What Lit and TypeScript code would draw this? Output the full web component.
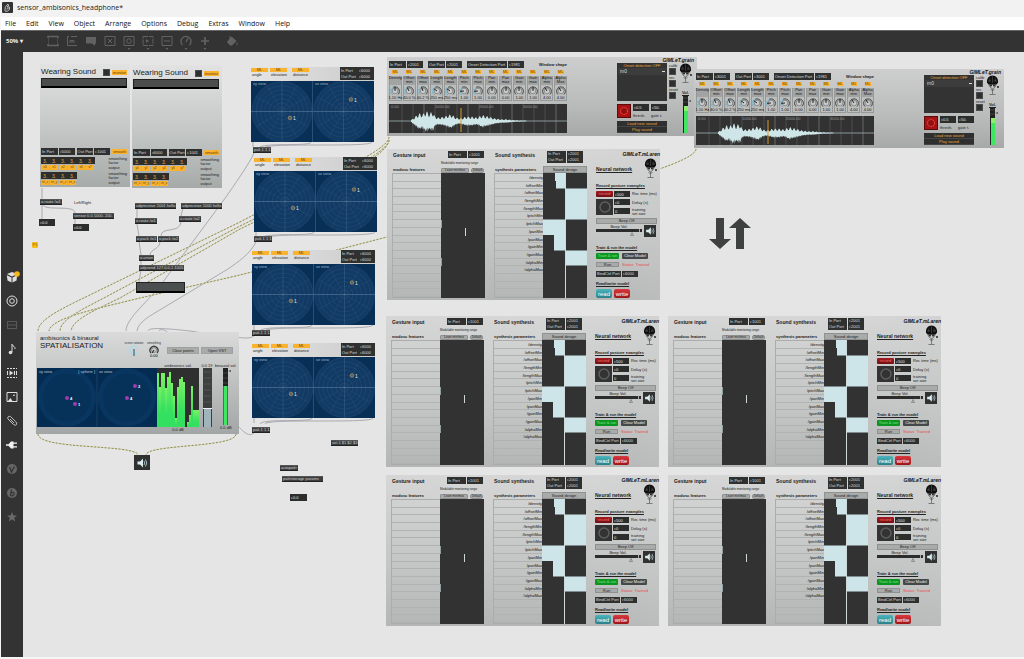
import { LitElement, html, svg, css } from "lit";
import { customElement, property } from "lit/decorators.js";

/* Patcher view origin inside the window */
const OX = 23;
const OY = 52;
const at = (x: number, y: number, w?: number) =>
  `left:${x - OX}px;top:${y - OY}px;${w ? `width:${w}px` : ""}`;

const shared = css`
  :host {
    display: block;
    box-sizing: border-box;
    font: 4px/5px "Liberation Sans", Arial, sans-serif;
    color: #222;
  }
  * { box-sizing: border-box; }
  button, input, select {
    appearance: none;
    font: inherit;
    color: inherit;
    margin: 0;
    padding: 0;
    border: 0;
    border-radius: 0;
    background: none;
    min-width: 0;
    white-space: nowrap;
  }
  svg { display: block; }
  h2, h3, p { margin: 0; font-weight: 700; white-space: nowrap; }
  .port { display: flex; gap: 1px; height: 7px; line-height: 7px; color: #ddd; white-space: nowrap; }
  .port span { flex: 1; background: #2f3131; padding-left: 1px; }
  .port input { width: 16px; height: 7px; background: #2f3131; padding-left: 1px; }
  .num { height: 7px; background: #2c2e2e; color: #e4e4e4; padding-left: 1px; width: 16px; }
  .orange { background: #f9b32f; color: #6b4508; height: 5px; line-height: 5px; text-align: center; }
  .grey { background: #a9abab; border: 1px solid #8f9191; line-height: 4px; text-align: center; color: #222; }
  .check { width: 7px; height: 7px; background: #2e3030; border: 1px solid #4a4c4c; }
  .brand { display: flex; justify-content: flex-end; font: italic 700 5px/6px "Liberation Sans", Arial, sans-serif; white-space: nowrap; color: #111; }
`;

const port = (label: string, value: string) =>
  html`<label class="port"><span>${label}</span><input .value=${"▹" + value} /></label>`;

const brainIcon = html`<svg width="13" height="20" viewBox="0 0 13 20">
  <path d="M1 7.500C.5 3.500 3 .5 6.500 .5S12.500 3.500 12 7.500L10.500 9.500H2.500Z" fill="#101010"/>
  <path d="M6.500 1.500V8M3.800 3.500V6.500M9.200 3.500V6.500M2 6H5M8 6H11" stroke="#8a8c8c" stroke-width=".35" fill="none"/>
  <path d="M3 9.500C3.500 12 5 13 6.500 14C8 13 9.500 12 10 9.500Z" fill="#c4c6c6" stroke="#222" stroke-width=".6"/>
  <circle cx="5" cy="10.500" r=".9" fill="#111"/><circle cx="8" cy="10.500" r=".9" fill="#111"/>
  <circle cx="12" cy="12" r=".9" fill="#111"/>
  <path d="M6.500 14V19M3.500 19.500H9.500M4.500 14L6.500 16L8.500 14" fill="none" stroke="#555" stroke-width=".7"/></svg>`;

const speaker = (s: number) => html`<svg width=${s} height=${s} viewBox="0 0 14 14">
  <path d="M2.500 5.500h2.500l3-3v9l-3-3H2.500z" fill="#dcebee"/>
  <path d="M9 5q1.500 2 0 4M10.500 3.500q2.500 3.500 0 7" stroke="#a9bcc0" stroke-width="1" fill="none"/></svg>`;

@customElement("wearing-sound")
class WearingSound extends LitElement {
  @property() inPort = "";
  @property() prefix = "x";
  static styles = [shared, css`
    .panel { background: linear-gradient(#e2e2e2, #c6c9c8 50%, #a6abaa); padding: 2px 3px 2px 1px; }
    .head { display: flex; align-items: center; height: 12px; gap: 2px; }
    h2 { font: 400 8px/10px "Liberation Sans", Arial, sans-serif; flex: 1; color: #222; }
    .head .orange, .ports .orange { width: 15px; }
    .console { height: 10px; background: #4a4d4c; border: 1px solid #222; border-bottom: 2px solid #000; }
    .ports { display: flex; align-items: center; gap: 2px; margin-top: 60px; }
    .ports .port { width: 34px; }
    .ports .orange { margin-left: auto; }
    .row { display: flex; margin-top: 2px; }
    .cells { display: grid; row-gap: 1px; width: 69px; }
    .cells input { height: 7px; background: #2d2d2b; color: #e2a648; padding-left: 2px; font-size: 5px; }
    .cells .orange { width: 8px; height: 5px; font-size: 3px; }
    .notes { display: flex; flex-direction: column; line-height: 4px; gap: 1px; }
  `];
  group(names: string[]) {
    return html`<div class="row">
      <div class="cells" style=${`grid-template-columns:repeat(${names.length},9px)`}>
        ${names.map((n) => html`<input aria-label=${n} .value=${"3."} />`)}
        ${names.map((n) => html`<button class="orange">${n}</button>`)}
      </div>
      <div class="notes"><span>smoothing<br />factor</span><span>output</span></div>
    </div>`;
  }
  render() {
    const p = this.prefix;
    return html`<section class="panel">
      <div class="head"><h2>Wearing Sound</h2><input class="check" type="checkbox" aria-label="monitor" /><button class="orange">monitor</button></div>
      <div class="console"></div>
      <div class="ports">${port("In Port", this.inPort)}${port("Out Port", "1001")}<button class="orange">smooth</button></div>
      ${this.group([p + "0", p + "1", p + "2", p + "4", p + "6", p + "7"])}
      ${this.group(["int_x", "int_y", "int_z", "int_a"])}
    </section>`;
  }
}

const polar = (cx: number, cy: number, r: number, rings: number) => svg`
  <circle cx=${cx} cy=${cy} r=${r} fill="#113a64"/>
  ${Array.from({ length: rings }, (_, i) => svg`<circle cx=${cx} cy=${cy} r=${(r * (i + 1)) / rings} fill="none" stroke="#4a6f92" stroke-width=".4" opacity=".5"/>`)}
  ${Array.from({ length: 12 }, (_, i) => {
    const a = (i * Math.PI) / 6;
    return svg`<path d=${`M${cx} ${cy}L${cx + r * Math.cos(a)} ${cy + r * Math.sin(a)}`} stroke="#5d80a2" stroke-width=${i % 3 ? 0.3 : 0.6} opacity=".5"/>`;
  })}`;

@customElement("source-position")
class SourcePosition extends LitElement {
  @property() inPort = "";
  static styles = [shared, css`
    .head { display: flex; height: 14px; background: linear-gradient(90deg, #e4e4e4, #cbcbcb); gap: 1px; }
    .ctl { width: 18px; padding-top: 1px; }
    .ctl.far { margin-left: 3px; }
    .ctl span { display: block; padding-left: 1px; line-height: 6px; }
    .ctl .orange { display: block; width: 17px; height: 4px; line-height: 4px; }
    .ports { margin-left: auto; width: 34px; height: 13px; background: #2f3131; }
    .ports .port { height: 6px; line-height: 7px; gap: 0; }
    .plot { display: block; width: 100%; background: #082f56; }
  `];
  render() {
    const ctl = (n: string, far = false) => html`<div class="ctl ${far ? "far" : ""}"><button class="orange" aria-label=${"map " + n}>ML</button><span>${n}</span></div>`;
    const source = (x: number, y: number) => svg`<circle cx=${x} cy=${y} r="1.800" fill="#5d615c" stroke="#b99a6a" stroke-width=".6"/><text x=${x + 3} y=${y + 2} font-size="5" fill="#dde6ee">1</text>`;
    return html`<section>
      <div class="head">${ctl("angle")}${ctl("elevation")}${ctl("distance", true)}
        <div class="ports">${port("In Port", this.inPort)}${port("Out Port", this.inPort)}</div></div>
      <svg class="plot" viewBox="0 0 123 61">
        ${polar(31, 30.5, 30, 7)}${polar(92.5, 30.5, 30, 7)}
        <path d="M61.500 0V61M0 30.500H123" stroke="#5d80a2" stroke-width=".4"/>
        <text x="2" y="4" font-size="4" fill="#9db6cc">xy view</text><text x="64" y="4" font-size="4" fill="#9db6cc">xz view</text>
        ${source(39, 37)}${source(100, 18.5)}
      </svg></section>`;
  }
}

const KNOBS: [string, string, string, number][] = [
  ["Density", "", "1.10 Hz", 0.5], ["Offset", "min", "40.0 %", 0.4], ["Offset", "max", "40.2 %", 0.42],
  ["Length", "min", "250 ms", 0.3], ["Length", "max", "250 ms", 0.3], ["Pitch", "min", "1.00", 0.15],
  ["Pitch", "max", "1.00", 0.15], ["Pan", "min", "0.00", 0.5], ["Pan", "max", "0.00", 0.5],
  ["Gain", "min", "1.00", 0.5], ["Gain", "max", "1.00", 0.5], ["Alpha", "min", "4.00", 0.38], ["Alpha", "Max", "4.00", 0.38],
];

const ENVELOPE = [[22, 1], [25, 4], [30, 9], [34, 8], [37, 12], [40, 9], [44, 11], [46, 5], [50, 4], [55, 5], [62, 8], [67, 4], [71, 3], [77, 5], [83, 5], [88, 4], [93, 7], [100, 5], [106, 3], [112, 2], [118, 2], [124, 1], [138, 0.4]];
const wave = (() => {
  const up: string[] = [];
  const down: string[] = [];
  for (let x = 22; x <= 138; x += 0.7) {
    const i = Math.max(1, ENVELOPE.findIndex((p) => p[0] >= x));
    const [x0, a0] = ENVELOPE[i - 1];
    const [x1, a1] = ENVELOPE[i];
    const a = a0 + ((a1 - a0) * (x - x0)) / (x1 - x0);
    up.push(`${x.toFixed(1)} ${(17 - a * (0.65 + 0.25 * Math.sin(x * 7.3))).toFixed(1)}`);
    down.unshift(`${x.toFixed(1)} ${(17 + a * (0.8 + 0.2 * Math.sin(x * 5.1 + 2))).toFixed(1)}`);
  }
  return `M${up.join("L")}L${down.join("L")}Z`;
})();

@customElement("gimlet-grain")
class GimletGrain extends LitElement {
  @property() inPort = "";
  static styles = [shared, css`
    .panel { display: grid; grid-template-columns: 226px 50px 8px 13px; column-gap: 2px; background: linear-gradient(#cecece, #b9bcbb 60%, #a6a9a8); padding: 1px 3px 3px 2px; height: 79px; justify-content: start; }
    .main { display: flex; flex-direction: column; gap: 2px; padding-top: 3px; width: 178px; }
    .ports { display: flex; gap: 5px; }
    .ports .port { width: 34px; }
    .ports .port:nth-of-type(3) { width: 57px; }
    .ports b { margin-left: auto; line-height: 7px; white-space: nowrap; }
    .knobs { display: grid; grid-template-columns: repeat(13, minmax(0, 1fr)); column-gap: 1px; }
    .knob { display: flex; flex-direction: column; align-items: center; }
    .knob .orange { width: 6px; height: 4px; line-height: 4px; margin-bottom: 2px; }
    .dial { width: 100%; height: 25px; background: #bcbebe; border: 1px solid #979999; border-width: 0 1px 1px; display: flex; flex-direction: column; align-items: center; white-space: nowrap; line-height: 4px; color: #111; }
    .names { height: 9px; width: 100%; background: #a2a4a4; display: flex; flex-direction: column; align-items: center; }
    .wave { margin-top: 1px; background: #323232; }
    .mid { padding-top: 5px; }
    .list { background: #333; height: 38px; color: #e9a53a; text-align: center; white-space: nowrap; }
    .list select { display: block; width: 48px; height: 7px; padding-left: 2px; color: #ddd; font-size: 5px; background: #3c3c3c linear-gradient(#ddd, #ddd) 44px 3px / 3px 1px no-repeat; margin-left: 1px; }
    .onset { display: grid; grid-template-columns: 14px 16px 16px; gap: 2px; margin-top: 3px; height: 14px; }
    .onset button { background: #a41414; border: 1px solid #5e0a0a; height: 14px; }
    .onset label { display: flex; flex-direction: column; gap: 2px; line-height: 5px; }
    .wide { display: block; width: 50px; height: 6px; background: #2f2f2f; color: #e9a53a; border-bottom: 1px solid #444; line-height: 5px; }
    .wide.first { margin-top: 3px; }
    .toggles { display: flex; flex-direction: column; padding-top: 6px; }
    .toggles label { display: flex; flex-direction: column; height: 12px; line-height: 4px; }
    .right { display: flex; flex-direction: column; align-items: center; }
    .right .brand { width: 17px; line-height: 5px; }
    .right svg { flex: none; }
    .vol { display: flex; flex-direction: column; align-items: center; margin-top: 7px; width: 13px; }
    .vol u { font-weight: 700; line-height: 5px; }
  `];
  render() {
    return html`<section class="panel">
      <div class="main">
        <div class="ports">${port("In Port", this.inPort)}${port("Out Port", this.inPort)}${port("Onset Detection Port", "1981")}<b>Window shape</b></div>
        <div class="knobs">${KNOBS.map(([a, b, v, f]) => {
          const t = ((f * 270 - 225) * Math.PI) / 180;
          return html`<div class="knob"><button class="orange" aria-label=${`map ${a} ${b}`}>ML</button>
            <div class="dial"><div class="names"><span>${a}</span><span>${b}</span></div>
              <svg width="12" height="11" viewBox="0 0 12 11"><path d="M3 9.500A4.400 4.400 0 1 1 9 9.500" fill="none" stroke="#444" stroke-width="1"/>
                <path d=${(f < 0.45 && a !== "Alpha") || a === "Density" ? "M3 9.500A4.400 4.400 0 0 1 4 2.300" : "M0 0"} fill="none" stroke="#8cc9e0" stroke-width="1.200"/>
                <circle cx="6" cy="6" r="2.800" fill="#c9cbcb" stroke="#555" stroke-width=".5"/>
                <path d=${`M6 6L${6 + 4 * Math.cos(t)} ${6 + 4 * Math.sin(t)}`} stroke="#111" stroke-width=".9"/></svg>
              ${v}</div></div>`;
        })}</div>
        <svg class="wave" width="178" height="29" viewBox="0 0 178 29">
          ${Array.from({ length: 15 }, (_, i) => svg`<path d=${`M${13 + i * 11} 0V29`} stroke=${i % 4 === 2 ? "#8a8a8a" : "#5f5f5f"} stroke-width=".6"/>`)}
          <path d="M0 17H178" stroke="#9db0b3" stroke-width=".8"/>
          <path d=${wave} fill="#cfe6e9"/>
          <path d="M72 4V28" stroke="#d99a2b" stroke-width="1"/>
          ${["0.00", "1000.00", "2000.00", "3000.00"].map((s, i) => svg`<text x=${2 + i * 44} y="4" font-size="4" fill="#9a9a9a">${s}</text>`)}
        </svg>
      </div>
      <div class="mid">
        <div class="list">Onset detection OFF<select aria-label="Onset preset"><option>m0</option></select></div>
        <div class="onset"><button aria-label="Onset"><svg width="12" height="12" viewBox="0 0 12 12"><circle cx="6" cy="6" r="3.500" fill="#8e1010" stroke="#f03a3a" stroke-width="1.200" stroke-dasharray="1.500 .7"/></svg></button>
          <label><input class="num" .value=${"▹0.5"} />thresh.</label><label><input class="num" .value=${"▹50."} />gate t.</label></div>
        <button class="wide first">Load new sound</button><button class="wide">Play sound</button>
      </div>
      <div class="toggles">${["calib", "rec", "reset"].map((n) => html`<label>${n}<input class="check" type="checkbox" /></label>`)}</div>
      <div class="right"><div class="brand">GIMLeT.grain</div>${brainIcon}
        <div class="vol"><u>Vol.</u><svg width="11" height="38" viewBox="0 0 11 38">
          <rect x="3" width="5" height="38" fill="#222"/><rect x="4" y="11" width="4" height="27" fill="#3fe65f"/>
          <rect x="4" y="11" width="4" height="5" fill="#8df06a"/><path d="M8 6l3-1v2z" fill="#555"/><path d="M3 3H8M3 7H8" stroke="#666" stroke-width=".5"/></svg></div>
      </div>
    </section>`;
  }
}

const PARAMS = ["/density", "/offsetMin", "/offsetMax", "/lengthMin", "/lengthMax", "/pitchMin", "/pitchMax", "/panMin", "/panMax", "/gainMin", "/gainMax", "/alphaMin", "/alphaMax", "", "", ""];

@customElement("gimlet-mlaren")
class GimletMlaren extends LitElement {
  @property() inPort = "1001";
  static styles = [shared, css`
    .panel { display: grid; grid-template-columns: 93px 93px 1fr; column-gap: 9px; padding: 2px 3px 2px 5px; background: linear-gradient(90deg, transparent 70%, #c9cbca55), linear-gradient(#d6d6d6, #c3c6c5 60%, #b3b6b5); }
    .half { display: grid; grid-template-columns: 49px 44px; grid-template-rows: 22px 125px; }
    .titles { display: flex; flex-direction: column; justify-content: space-between; padding: 1px 0 1px 1px; }
    h2 { font-size: 5px; line-height: 6px; }
    h3 { font-size: 4px; line-height: 5px; }
    u { text-underline-offset: 1px; text-decoration-thickness: 1px; }
    .tools { display: flex; flex-direction: column; justify-content: space-between; }
    .tools .port { width: 36px; margin-left: 7px; }
    .tools .ports { height: 13px; }
    .tools .ports .port { height: 6px; line-height: 6px; margin-left: 4px; gap: 1px; }
    .ports input { height: 6px; }
    .range { font-size: 3px; line-height: 4px; white-space: nowrap; }
    .pair { display: flex; gap: 2px; }
    .pair .grey { height: 5px; font-size: 3px; line-height: 3px; width: 28px; border-radius: 1px; }
    .pair .grey + .grey { width: 13px; border-radius: 2px; }
    .design { height: 7px; line-height: 5px; }
    ul { margin: 0; padding: 0; list-style: none; display: grid; grid-template-rows: repeat(16, 1fr); border: 1px solid #aaadac; border-width: 1px 0 1px 1px; }
    li { border-bottom: 1px solid #b0b3b2; text-align: right; line-height: 8px; min-height: 0; color: #111; }
    .net { display: flex; flex-direction: column; }
    .nethead { display: flex; justify-content: space-between; height: 28px; margin-right: -3px; }
    .nethead h2 { padding-top: 15px; }
    .who { display: flex; flex-direction: column; align-items: flex-end; width: 13px; gap: 1px; }
    .who svg { margin-right: 3px; }
    .gap { margin-top: 4px; }
    .gap.more { margin-top: 8px; }
    .rec { display: grid; grid-template-columns: 17px 16px 1fr; grid-template-rows: 6px 7px 7px; gap: 2px 1px; margin: 3px 0; white-space: nowrap; }
    .rec .num { height: 6px; }
    .rec label { padding-left: 1px; line-height: 4px; align-self: center; }
    .red, .green, .dark, .teal { border-radius: 1px; color: #eee; line-height: 6px; height: 6px; text-align: center; }
    .red { background: linear-gradient(#a51a1f, #701014); color: #e77; }
    .ring { grid-row: 2 / 4; background: #333; display: grid; place-items: center; height: 16px; }
    .beep { height: 6px; width: 100%; }
    .vol { display: grid; grid-template-columns: 46px 12px; justify-content: space-between; margin-top: 1px; height: 12px; padding-right: 1px; }
    .vol label { display: block; text-align: center; line-height: 4px; }
    .vol input { display: block; width: 46px; height: 3px; background: #2c2c2c; }
    .vol input::-webkit-slider-thumb { appearance: none; width: 1px; height: 3px; background: #aaa; }
    .vol .tip { display: block; margin-left: 34px; }
    .vol button { background: #303232; width: 12px; height: 12px; }
    .acts { display: flex; gap: 3px; margin-top: 3px; height: 6px; white-space: nowrap; }
    .acts > .green, .acts > .grey { width: 23px; }
    .acts .grey { height: 5px; line-height: 3px; }
    .green { background: #0c9420; color: #7fe58a; }
    .dark { background: #454848; width: 26px; }
    .status { color: #ea4a4a; }
    .acts .port { width: 42px; height: 6px; line-height: 6px; }
    .acts .port input { height: 6px; }
    .io { display: flex; gap: 2px; margin-top: 3px; }
    .io button { width: 16px; height: 9px; font-size: 6px; line-height: 8px; border-radius: 2px; color: #fff; }
    .teal { background: linear-gradient(#4cb4bd, #2b7f88); }
    .io .red { background: linear-gradient(#d8393f, #9c1419); }
  `];
  render() {
    return html`<section class="panel">
      <div class="half">
        <div class="titles"><h2>Gesture input</h2><h3>modosc features</h3></div>
        <div class="tools">${port("In Port", this.inPort)}<div class="range">Modulable monitoring range</div>
          <div class="pair"><button class="grey">Learn min/max</button><button class="grey">Default</button></div></div>
        <ul>${PARAMS.map(() => html`<li></li>`)}</ul>
        <svg width="44" height="125" viewBox="0 0 44 125"><rect width="44" height="125" fill="#323232"/><rect x="24" y="55" width="1" height="8" fill="#cfd8d8"/><path d="M.5 47v8M.5 85v8" stroke="#8fa0a0" stroke-width="1"/></svg>
      </div>
      <div class="half">
        <div class="titles"><h2>Sound synthesis</h2><h3>synthesis parameters</h3></div>
        <div class="tools"><div class="ports">${port("In Port", "2001")}${port("Out Port", "2001")}</div><button class="grey design">Sound design</button></div>
        <ul>${PARAMS.map((p) => html`<li>${p}</li>`)}</ul>
        <svg width="44" height="125" viewBox="0 0 44 125"><rect width="44" height="125" fill="#323232"/>
          <path d="M12 0H22V15.500H13V8H12ZM23 15.500H44V46.500H23ZM0 46.500H22V77.500H11V62H0ZM23 77.500H44V92.500H23Z" fill="#cde5e8"/>
          <path d="M22.500 0V125" stroke="#cfdada" stroke-width="1"/></svg>
      </div>
      <div class="net">
        <div class="nethead"><h2><u>Neural network</u></h2><div class="who"><div class="brand">GIMLeT.mLaren</div>${brainIcon}</div></div>
        <h3 class="gap"><u>Record posture examples</u></h3>
        <div class="rec">
          <button class="red">record</button><input class="num" id="t" .value=${"▹500"} /><label for="t">Rec time (ms)</label>
          <div class="ring"><svg width="14" height="14" viewBox="0 0 14 14"><circle cx="7" cy="7" r="5" fill="none" stroke="#5e5e5e" stroke-width="1.500"/></svg></div>
          <input class="num" id="d" .value=${"▹0"} /><label for="d">Delay (s)</label>
          <input class="num" id="s" .value=${"0"} /><label for="s">training<br />set size</label>
        </div>
        <button class="grey beep">Beep Off</button>
        <div class="vol"><div><label for="v">Beep Vol.</label><input type="range" id="v" value="95" /><svg class="tip" width="4" height="4" viewBox="0 0 4 4"><path d="M2 .5L3.500 3.500H.5Z" fill="none" stroke="#555" stroke-width=".5"/></svg></div><button aria-label="Audio">${speaker(12)}</button></div>
        <h3 class="gap more"><u>Train &amp; run the model</u></h3>
        <div class="acts"><button class="green">Train &amp; run</button><button class="dark">Clear Model</button></div>
        <div class="acts"><button class="grey">Run</button><span class="status">Status: Trained</span></div>
        <div class="acts">${port("BindCtrl Port", "6000")}</div>
        <h3 class="gap"><u>Read/write model</u></h3>
        <div class="io"><button class="teal">read</button><button class="red">write</button></div>
      </div>
    </section>`;
  }
}

const LEVELS = [91, 68, 91, 91, 66, 85, 94, 74, 52, 16, 67, 81, 85, 77, 0, 9, 20, 69, 28, 28, 28];

@customElement("spatialisation-panel")
class SpatialisationPanel extends LitElement {
  static styles = [shared, css`
    .panel { background: linear-gradient(#dadada, #c4c6c6 40%, #a3a6a6); padding: 3px 4px 2px 1px; height: 102px; display: flex; flex-direction: column; }
    .head { display: flex; height: 26px; padding-left: 3px; }
    h2 { font: 400 6px/7px "Liberation Sans", Arial, sans-serif; width: 84px; }
    h2 strong { display: block; font-weight: 400; font-size: 8px; line-height: 8px; }
    .dial { display: flex; flex-direction: column; align-items: center; width: 20px; padding-top: 6px; font-size: 3px; line-height: 4px; white-space: nowrap; color: #333; }
    .dial i { font-style: normal; }
    .btns { display: flex; gap: 2px; padding: 12px 0 0 3px; }
    .grey { width: 32px; height: 7px; line-height: 5px; border-color: #9fa1a1; }
    .body { display: grid; grid-template-columns: 120px 42px 16px 1fr; }
    .col { display: flex; flex-direction: column; align-items: center; line-height: 5px; padding-top: 2px; white-space: nowrap; }
    .col span { height: 5px; }
    .col.plots { padding-top: 7px; }
    .bars { width: 42px; height: 59px; background: #2f2f2f; display: grid; grid-template-columns: repeat(21, 2px); align-items: end; }
    .bar { background: linear-gradient(#7df065, #33e060 70%); }
  `];
  render() {
    const dot = (x: number, y: number, n: string) => svg`<circle cx=${x} cy=${y} r="2" fill="#a53aa8"/><text x=${x + 3} y=${y + 1.5} font-size="4" font-weight="700" fill="#fff">${n}</text>`;
    return html`<section class="panel">
      <div class="head"><h2>ambisonics &amp; binaural<strong>SPATIALISATION</strong></h2>
        <div class="dial"><i>scene rotation</i><svg width="10" height="12" viewBox="0 0 10 12"><circle cx="5" cy="5" r="4" fill="none" stroke="#9fdcee" stroke-width="1"/><path d="M5 4V11" stroke="#5b7c88" stroke-width="1.500"/></svg></div>
        <div class="dial"><i>smoothing</i><svg width="10" height="12" viewBox="0 0 10 12"><path d="M2 8A4 4 0 1 1 8 8" fill="none" stroke="#333" stroke-width="1.200"/><circle cx="5" cy="5" r="2.500" fill="#ccc" stroke="#555" stroke-width=".6"/><path d="M5 5L3 8" stroke="#111"/><text x="1" y="12" font-size="4">0.00</text></svg></div>
        <div class="btns"><button class="grey">Clear points</button><button class="grey">Open VST</button></div></div>
      <div class="body">
        <div class="col plots"><svg width="120" height="59" viewBox="0 0 120 59"><rect width="120" height="59" fill="#042c52"/>
          <circle cx="30" cy="29.500" r="29" fill="#083660"/><circle cx="90" cy="29.500" r="29" fill="#083660"/>
          <circle cx="30" cy="29.500" r="24" fill="#063158"/><circle cx="90" cy="29.500" r="24" fill="#063158"/>
          <path d="M60 0V59" stroke="#2a5078" stroke-width=".6"/>
          <text x="2" y="5" font-size="4" fill="#b9cad9">xy view</text><text x="58" y="5" font-size="4" text-anchor="end" fill="#b9cad9">[ sphere ]</text><text x="62" y="5" font-size="4" fill="#b9cad9">xz view</text>
          ${dot(30, 30, "4")}${dot(38, 36, "1")}${dot(98, 18, "2")}${dot(90, 30, "4")}</svg></div>
        <div class="col"><span>ambisonics vol.</span><div class="bars">${LEVELS.map((v) => html`<div class="bar" style=${`height:${v}%`}></div>`)}</div><span>0.0 dB</span></div>
        <div class="col"><span>0.0 19</span><svg width="9" height="59" viewBox="0 0 9 59"><rect width="9" height="59" fill="#3d3f3f"/><path d="M1 4H8M1 10H8M1 16H8M1 22H8M1 28H8M1 34H8" stroke="#555" stroke-width="1"/><rect x="1" y="41" width="7" height="18" fill="#9fb4bb"/><rect y="40" width="9" height="1" fill="#eef"/></svg></div>
        <div class="col"><span>binaural vol.</span><svg width="11" height="57" viewBox="0 0 11 57"><rect x="3" width="5" height="57" fill="#222"/><rect x="3.500" y="18" width="4" height="39" fill="#3fe65f"/><path d="M8 3l3-1v2z" fill="#555"/><path d="M3 5H8M3 10H8M3 15H8" stroke="#666" stroke-width=".5"/></svg><span>0.0 dB</span></div>
      </div>
    </section>`;
  }
}

type Box = [number, number, number, string];
const OBJECTS: Box[] = [
  [40, 199, 20, "o.route /w1"], [73, 213, 37, "sensor 0.0 1000. 200."],
  [135, 203, 37, "udpreceive 1001 hello"], [181, 203, 37, "udpreceive 1000 hello"],
  [135, 218, 20, "o.route /w1"], [179, 216, 19, "o.route /w2"],
  [136, 236, 19, "o.pack /w1"], [158, 236, 19, "o.pack /w2"],
  [139, 255, 14, "o.union"], [139, 265, 41, "udpsend 127.0.0.1 1005"],
  [253, 147, 15, "pak 1 1 1"], [254, 236, 15, "pak 1 1 1"], [252, 330, 14, "pak 1 1 1"], [252, 427, 14, "pak 1 1 1"],
  [331, 440, 27, "set 1 $1 $2 $3"], [280, 465, 17, "autopattr"], [282, 476, 41, "pattrstorage params"],
];
const NUMBERS: Box[] = [[39, 219, 16, "▹0.0"], [73, 224, 16, "▹0.0"], [290, 494, 17, "▹0.0"]];
const SOURCES = [[251, 67], [254, 157], [252, 250], [252, 343]];
const MODELS = [[387, 149], [386, 316], [668, 316], [386, 475], [668, 475]];

const CORDS = [
  "M42 188V199", "M42 204V219", "M43 204C43 212 75 204 75 213", "M75 219V224",
  "M137 208V218", "M137 224L139 236", "M183 208L181 216", "M181 222C180 234 161 226 161 236", "M160 241C160 250 151 248 150 255",
  "M139 241L141 255", "M141 260V265", "M141 270L139 282",
  "M254 153C250 163 232 188 226 197L163 282C150 300 126 318 126 331",
  "M256 242C250 254 238 262 228 269L163 308C150 316 138 322 137 331",
  "M254 336C248 340 240 337 222 336L190 331C180 330 148 326 148 331", "M159 331C159 329 166 329 168 333",
  "M254 433C248 438 242 430 236 424",
  ...SOURCES.map(([x, y]) => `M${x + 2} ${y + 75}V${y + 80}M${x + 60} ${y + 75}C${x + 60} ${y + 80} ${x + 10} ${y + 75} ${x + 8} ${y + 81}M${x + 121} ${y + 75}C${x + 121} ${y + 81} ${x + 14} ${y + 75} ${x + 13} ${y + 81}`),
];
const SIGNALS = [
  "M389 137C389 150 330 175 240 222L100 290C70 305 38 318 38 331",
  "M389 140C389 152 330 182 240 226L115 292C90 306 60 318 60 331",
  "M389 140C389 158 300 200 240 229L120 298C95 310 72 320 71 331",
  "M696 149C696 165 560 200 387 237L240 275L140 298C100 308 50 318 49 331",
  "M38 434C38 450 136 444 138 455", "M236 434C236 448 146 444 146 455",
];

const G = "#626262";
const TOOLS = [
  svg`<path d="M1 3V1.500H11V3M1 9V10.500H11V9" fill="none" stroke=${G} stroke-width="1.500"/><path d="M1.500 3V9M10.500 3V9" stroke="#4a4a4a"/>`,
  svg`<path d="M3 1.500H1.500V10.500H11M5 1.500H11" fill="none" stroke=${G}/><path d="M4 8V5.500H8V8M6 5.500V8" fill="none" stroke=${G}/>`,
  svg`<path d="M1 2H11V8.500H10V11L7 8.500H1Z" fill=${G}/>`,
  svg`<path d="M1 1.500H11V10.500H1ZM4 4L8 8M8 4L4 8" fill="none" stroke=${G}/>`,
  svg`<path d="M1 1.500H11V10.500H1Z" fill="none" stroke=${G}/><circle cx="6" cy="6" r="2.300" fill="none" stroke=${G}/>`,
  svg`<path d="M1 1.500H11V10.500H1Z" fill="none" stroke=${G} stroke-dasharray="5 1"/><path d="M4 4L7 6L4 8Z" fill=${G}/>`,
  svg`<path d="M1 1.500H11V10.500H1ZM3 6H9" fill="none" stroke=${G}/>`,
  svg`<path d="M2.500 10A5 5 0 1 1 9.500 10M6 7L8 3" fill="none" stroke=${G} stroke-width="1.300"/>`,
  svg`<path d="M6 2V10M2 6H10" stroke=${G} stroke-width="1.700"/>`,
  svg`<path d="M5.500 2L10 6L6 10H4L1.500 7ZM4 1V5" fill=${G} stroke=${G}/><path d="M11 7.500V10" stroke=${G}/>`,
];
const W = "#dedede";
const SIDE: [string, unknown][] = [
  ["Packages", svg`<path d="M6 1L11 3L6 5.500L1 3ZM.8 4.200L5.500 6.500V11.500L1.500 9.500ZM11.200 4.200L6.500 6.500V11.500L10.500 9.500Z" fill=${W}/><circle cx="11" cy="3" r="2.800" fill="#f5b81c"/>`],
  ["Audio", svg`<circle cx="6" cy="6" r="5" fill="none" stroke=${W}/><circle cx="6" cy="6" r="2.300" fill="none" stroke=${W}/>`],
  ["Max for Live", svg`<path d="M1 2.500H11M1 9.500H11M1.500 3V9M10.500 3V9M2 6H10" fill="none" stroke="#595959"/>`],
  ["Notes", svg`<path d="M6 1V9M6 1.500C7 3.500 9.500 3.500 9 6" fill="none" stroke=${W}/><circle cx="4.500" cy="9.500" r="1.800" fill=${W}/>`],
  ["Video", svg`<path d="M1 1.500H11M1 10.500H11" stroke=${W} stroke-dasharray="2 1"/><path d="M1.500 4V8M10.500 4V8" stroke=${W}/><path d="M3.500 3.500L7.500 6L3.500 8.500ZM8 4H9V8H8Z" fill=${W}/>`],
  ["Images", svg`<path d="M1 1.500H11V10.500H1Z" fill="none" stroke=${W}/><path d="M2 10L4.500 7L6.500 10ZM7 5L8 3L9 5Z" fill=${W}/>`],
  ["Clippings", svg`<path d="M2 4L7.500 9.500Q9.500 11 10.500 9.500T9.500 6.500L4.500 1.500Q3 .8 2 2T2.500 4.500L7 9M4 4L8 8" fill="none" stroke="#bdbdbd"/>`],
  ["Plug-ins", svg`<path d="M0 5.300H2.500L5 2.500H7.500V9.500H5L2.500 6.700H0ZM7.500 3.500H11V4.800H7.500ZM7.500 7.200H11V8.500H7.500Z" fill="#f2f2f2"/>`],
  ["Vizzie", svg`<circle cx="6" cy="6" r="5" fill="#666"/><path d="M3.500 4L5.500 9L8.500 3.500" fill="none" stroke="#333" stroke-width="1.300"/>`],
  ["Beap", svg`<circle cx="6" cy="6" r="5" fill="#666"/><path d="M5.500 2.500L4.500 8.500Q7.500 9.500 8 7T5 6" fill="none" stroke="#333" stroke-width="1.200"/>`],
  ["Favourites", svg`<path d="M6 1L7.300 4.500H11L8.200 6.800L9.200 10.500L6 8.300L2.800 10.500L3.800 6.800L1 4.500H4.700Z" fill="#6a6a6a"/>`],
];

@customElement("app-root")
class AppRoot extends LitElement {
  static styles = [shared, css`
    :host { display: flex; flex-direction: column; height: 100vh; min-height: 600px; padding: 0 0 2px 1px; background: #f5f5f5; overflow: hidden; }
    .title { display: flex; align-items: center; gap: 4px; height: 17px; padding: 0 0 2px 1px; background: #f2f2f2; font: 7px/12px "Open Sans", sans-serif; color: #222; flex: none; }
    nav { display: flex; gap: 10px; height: 13px; padding-left: 4px; background: #fff; font: 7px/13px "Open Sans", sans-serif; flex: none; }
    nav button { color: #111; font-weight: 500; }
    .toolbar { display: flex; align-items: flex-start; height: 22px; background: #333; padding: 4px 0 0 5px; flex: none; border-top: 1px solid #666; }
    .toolbar .zoom { font: 700 6px/12px "Open Sans", sans-serif; color: #eee; width: 41px; text-align: left; height: 12px; }
    .tool { width: 12px; margin-right: 7px; height: 16px; }
    .tool:last-child { margin-left: 8px; }
    .main { display: flex; flex: 1; min-height: 0; }
    aside { width: 22px; background: #333; display: flex; flex-direction: column; align-items: center; gap: 12px; padding-top: 219px; flex: none; }
    aside button { height: 12px; }
    aside svg { overflow: visible; }
    .stage { position: relative; flex: 1; background: #e5e5e5; overflow: hidden; }
    .stage > * { position: absolute; }
    .cords { left: 0; top: 0; width: 100%; height: 100%; }
    .obj { min-width: min-content; height: 6px; line-height: 4px; background: #3c3e3e; color: #cfcfcf; border-top: 1px solid #555; border-bottom: 1px solid #222; white-space: nowrap; padding: 0 1px; }
    .tag { background: #f5bd1b; width: 6px; height: 6px; border-radius: 1px; text-align: center; line-height: 6px; color: #7c5b00; }
    .console { height: 11px; background: #4c4f4f; border: 1px solid #222; border-bottom: 2px solid #000; }
    .dac { background: #2f3131; height: 15px; display: grid; place-items: center; }
  `];
  render() {
    return html`
      <header class="title"><svg width="11" height="11" viewBox="0 0 11 11"><rect width="11" height="11" rx="1" fill="#333"/><path d="M3 8.500Q2 5 6 2L6.500 4L5 5L7.500 5Q8.500 8 5.500 9T3 8.500M4.500 7L6.500 6.500" fill="none" stroke="#e0e0e0" stroke-width=".8"/></svg>sensor_ambisonics_headphone*</header>
      <nav>${["File", "Edit", "View", "Object", "Arrange", "Options", "Debug", "Extras", "Window", "Help"].map((m) => html`<button>${m}</button>`)}</nav>
      <div class="toolbar"><button class="zoom">50% ▾</button>
        ${TOOLS.map((t, i) => html`<button class="tool" aria-label=${`Tool ${i + 1}`}><svg width="12" height="16" viewBox="0 0 12 16">${t}${i > 3 && i < 9 ? svg`<path d="M4.500 13H7.500L6 15Z" fill=${G}/>` : ""}</svg></button>`)}</div>
      <div class="main">
        <aside>${SIDE.map(([n, d]) => html`<button aria-label=${n}><svg width="12" height="12" viewBox="0 0 12 12">${d}</svg></button>`)}</aside>
        <main class="stage">
          <svg class="cords"><g transform=${`translate(${-OX} ${-OY})`} fill="none">
            ${CORDS.map((d) => svg`<path d=${d} stroke="#aaaab0" stroke-width="1"/>`)}
            ${SIGNALS.map((d) => svg`<path d=${d} stroke="#d9d7b4" stroke-width="1"/><path d=${d} stroke="#8f8e58" stroke-width="1" stroke-dasharray="2 1.500"/>`)}
            <path d="M716 218H724V239H731L720 249L709 239H716ZM736 249H744V228H751L740 218L729 228H736Z" fill="#3f4141"/>
          </g></svg>
          <wearing-sound style=${at(40, 64, 90)} inPort="5000" prefix="x"></wearing-sound>
          <wearing-sound style=${at(132, 65, 90)} inPort="6000" prefix="y"></wearing-sound>
          ${SOURCES.map(([x, y]) => html`<source-position style=${at(x, y, 123)} inPort="6000"></source-position>`)}
          <gimlet-grain style=${at(387, 57, 310)} inPort="2001"></gimlet-grain>
          <gimlet-grain style=${at(694, 69, 310)} inPort="3001"></gimlet-grain>
          ${MODELS.map(([x, y]) => html`<gimlet-mlaren style=${at(x, y, 273)}></gimlet-mlaren>`)}
          <spatialisation-panel style=${at(36, 332, 203)}></spatialisation-panel>
          ${OBJECTS.map(([x, y, w, t]) => html`<div class="obj" style=${at(x, y, w)}>${t}</div>`)}
          ${NUMBERS.map(([x, y, w, t]) => html`<input class="num" aria-label="value" style=${at(x, y, w)} .value=${t} />`)}
          <span style=${at(74, 200)}>Left/Right</span>
          <span class="tag" style=${at(32, 242)}>P1</span>
          <div class="console" style=${at(136, 282, 49)}></div>
          <button class="dac" aria-label="Audio output" style=${at(134, 455, 16)}>${speaker(14)}</button>
        </main>
      </div>`;
  }
}
